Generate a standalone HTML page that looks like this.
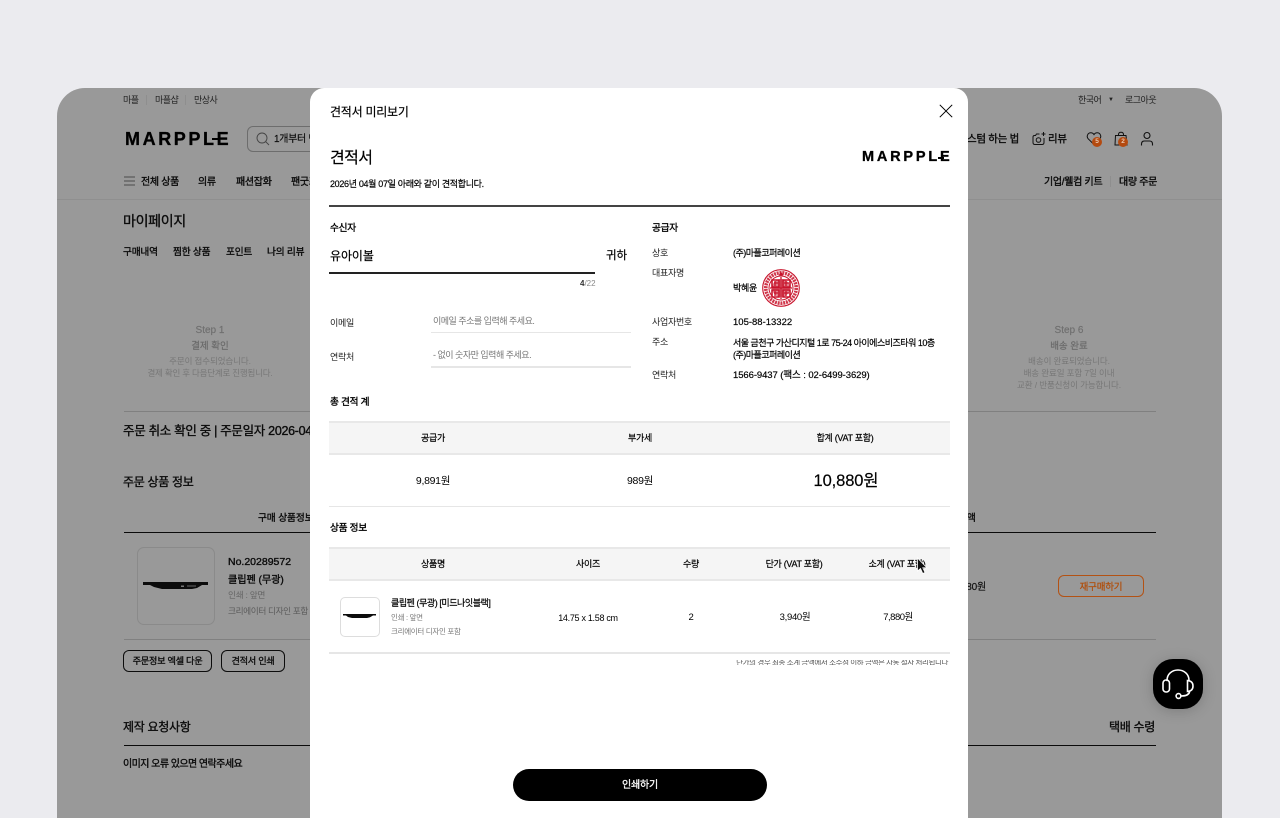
<!DOCTYPE html>
<html lang="ko"><head><meta charset="utf-8"><title>견적서 미리보기</title>
<style>
html,body{margin:0;padding:0;width:1280px;height:818px;overflow:hidden}
body{background:#ebebef;position:relative;font-family:"Liberation Sans","Noto Sans CJK KR",sans-serif;color:#000}
.t{position:absolute;line-height:16px;white-space:nowrap;font-size:10px;letter-spacing:-.3px}
.c{text-align:center}
.b{font-weight:400;-webkit-text-stroke:.35px currentColor}
.m{-webkit-text-stroke:.18px currentColor}
.n{letter-spacing:-.5px}
.r{position:absolute}
#win{position:absolute;left:57px;top:88px;width:1165px;height:730px;background:#999;border-radius:28px 28px 0 0;overflow:hidden}
#bg{position:absolute;left:-57px;top:-88px;width:1280px;height:818px}
#bg .t{color:#0b0b0b}
#modal{position:absolute;left:310px;top:88px;width:658px;height:730px;background:#fff;border-radius:14px 14px 0 0;overflow:hidden}
#m{position:absolute;left:-310px;top:-88px;width:1280px;height:818px}
.logo{position:absolute;font-weight:700;font-family:"Liberation Sans",sans-serif;white-space:nowrap;color:#000;-webkit-text-stroke:.3px #000}
.hd{position:absolute;left:329px;width:621px;background:#f5f5f5;border-top:2px solid #e8e8e8;border-bottom:2px solid #e8e8e8;box-sizing:border-box}
.ln{position:absolute;background:#e6e6e6}
.gbtn{position:absolute;box-sizing:border-box;border:1.5px solid #0c0c0c;border-radius:6px;text-align:center;font-size:9.2px;letter-spacing:-.3px;-webkit-text-stroke:.3px #0b0b0b;height:22px;line-height:21px;color:#0b0b0b;white-space:nowrap}
</style></head><body>

<div id="win"><div id="bg">
 <span class="t n" style="left:123px;top:92px;font-size:9px;color:#222">마플</span>
 <div class="r" style="left:146px;top:95px;width:1px;height:10px;background:#8e8e8e"></div>
 <span class="t n" style="left:155px;top:92px;font-size:9px;color:#222">마플샵</span>
 <div class="r" style="left:185px;top:95px;width:1px;height:10px;background:#8e8e8e"></div>
 <span class="t n" style="left:194px;top:92px;font-size:9px;color:#222">만상사</span>
 <span class="t n" style="left:1078px;top:92px;font-size:9px;color:#222">한국어</span>
 <span class="t" style="left:1108px;top:92px;font-size:6px;color:#222">▼</span>
 <span class="t n" style="left:1125px;top:92px;font-size:9px;color:#222">로그아웃</span>

 <div class="logo" style="left:125px;top:129px;font-size:18px;line-height:20px;letter-spacing:2.600px">MARPPLE</div>
 <div class="r" style="left:212px;top:138px;width:7px;height:2px;background:#000"></div>

 <div class="r" style="left:247px;top:126px;width:80px;height:26px;box-sizing:border-box;border:1px solid #6d6d6d;border-radius:6px"></div>
 <svg class="r" style="left:255px;top:131px" width="16" height="16" viewBox="0 0 16 16" fill="none" stroke="#444" stroke-width=".9"><circle cx="7" cy="7" r="5"/><path d="M10.600 10.600L14 14"/></svg>
 <span class="t m" style="left:274px;top:132px;font-size:10px">1개부터 만</span>

 <span class="t b" style="right:261px;top:131px;font-size:10.500px">커스텀 하는 법</span>
 <svg class="r" style="left:1031px;top:131px" width="16" height="15" viewBox="0 0 16 15" fill="none" stroke="#111" stroke-width="1"><path d="M8.500 3H5.500L4.500 4.500H3.500Q2 4.500 2 6V11.500Q2 13.500 4 13.500H11Q13 13.500 13 11.500V7"/><circle cx="7.500" cy="9" r="2.300"/><path d="M12.500 1v4M10.500 3h4"/></svg>
 <span class="t b" style="left:1048px;top:131px;font-size:10.500px">리뷰</span>
 <svg class="r" style="left:1086px;top:131px" width="17" height="16" viewBox="0 0 17 16" fill="none" stroke="#111" stroke-width="1"><path d="M8 13.500L2.200 7.800C0 5.200 2 1.800 4.800 1.800 6.200 1.800 7.300 2.500 8 3.600 8.700 2.500 9.800 1.800 11.200 1.800 14 1.800 16 5.200 13.800 7.800Z"/></svg>
 <div class="r c" style="left:1092px;top:137px;width:10px;height:10px;border-radius:50%;background:#b44a10;color:#e8c8b0;font-size:6.500px;line-height:10px;font-weight:700">5</div>
 <svg class="r" style="left:1113px;top:131px" width="16" height="16" viewBox="0 0 16 16" fill="none" stroke="#111" stroke-width="1"><path d="M2.500 4.500H13L14 14H2Z"/><path d="M5.500 4.500V3.500Q5.500 1.200 8 1.200T10.500 3.500V4.500"/></svg>
 <div class="r c" style="left:1118px;top:137px;width:10px;height:10px;border-radius:50%;background:#b44a10;color:#e8c8b0;font-size:6.500px;line-height:10px;font-weight:700">2</div>
 <svg class="r" style="left:1139px;top:131px" width="16" height="16" viewBox="0 0 16 16" fill="none" stroke="#111" stroke-width="1.100"><circle cx="8" cy="4.500" r="3"/><path d="M2.500 14.500V13Q2.500 10 5.500 10H10.500Q13.500 10 13.500 13V14.500"/></svg>

 <svg class="r" style="left:124px;top:176px" width="11" height="10" viewBox="0 0 11 10" stroke="#333" stroke-width=".8"><path d="M0 1h11M0 5h11M0 9h11"/></svg>
 <span class="t b" style="left:141px;top:175px">전체 상품</span>
 <span class="t b" style="left:198px;top:175px">의류</span>
 <span class="t b" style="left:236px;top:175px">패션잡화</span>
 <span class="t b" style="left:291px;top:175px">팬굿즈</span>
 <span class="t b" style="left:1044px;top:175px">기업/웰컴 키트</span>
 <div class="r" style="left:1110px;top:176px;width:1px;height:11px;background:#8e8e8e"></div>
 <span class="t b" style="left:1119px;top:175px">대량 주문</span>
 <div class="r" style="left:57px;top:199px;width:1165px;height:1px;background:#8f8f8f"></div>

 <span class="t b" style="left:123px;top:213px;font-size:14px">마이페이지</span>
 <span class="t b" style="left:123px;top:245px;font-size:9.700px;letter-spacing:-.2px">구매내역</span>
 <span class="t b" style="left:173px;top:245px;font-size:9.700px;letter-spacing:-.2px">찜한 상품</span>
 <span class="t b" style="left:226px;top:245px;font-size:9.700px;letter-spacing:-.2px">포인트</span>
 <span class="t b" style="left:267px;top:245px;font-size:9.700px;letter-spacing:-.2px">나의 리뷰</span>

 <span class="t c m" style="left:150px;width:120px;top:323px;font-size:10px;color:#6f6f6f;letter-spacing:0">Step 1</span>
 <span class="t c m" style="left:150px;width:120px;top:339px;font-size:9.500px;color:#6a6a6a;letter-spacing:0">결제 확인</span>
 <span class="t c" style="left:130px;width:160px;top:353px;font-size:8.500px;color:#777;letter-spacing:-.1px">주문이 접수되었습니다.</span>
 <span class="t c" style="left:130px;width:160px;top:365px;font-size:8.500px;color:#777;letter-spacing:-.2px">결제 확인 후 다음단계로 진행됩니다.</span>
 <span class="t c m" style="left:1009px;width:120px;top:323px;font-size:10px;color:#6f6f6f;letter-spacing:0">Step 6</span>
 <span class="t c m" style="left:1009px;width:120px;top:339px;font-size:9.500px;color:#6a6a6a;letter-spacing:0">배송 완료</span>
 <span class="t c" style="left:989px;width:160px;top:353px;font-size:8.500px;color:#777;letter-spacing:-.1px">배송이 완료되었습니다.</span>
 <span class="t c" style="left:989px;width:160px;top:365px;font-size:8.500px;color:#777;letter-spacing:-.1px">배송 완료일 포함 7일 이내</span>
 <span class="t c" style="left:989px;width:160px;top:377px;font-size:8.500px;color:#777;letter-spacing:-.1px">교환 / 반품신청이 가능합니다.</span>
 <div class="r" style="left:124px;top:411px;width:1032px;height:1px;background:#808080"></div>

 <span class="t b" style="left:123px;top:423px;font-size:12.500px">주문 취소 확인 중 | 주문일자 2026-04</span>
 <span class="t b" style="left:123px;top:474px;font-size:12px">주문 상품 정보</span>
 <span class="t b" style="left:258px;top:511px;font-size:9.700px;letter-spacing:-.1px">구매 상품정보</span>
 <span class="t b" style="left:958px;top:511px;font-size:9.700px;letter-spacing:0">금액</span>
 <div class="r" style="left:124px;top:532px;width:1032px;height:1px;background:#0a0a0a"></div>

 <div class="r" style="left:137px;top:547px;width:78px;height:78px;box-sizing:border-box;border:1px solid #8a8a8a;border-radius:7px"></div>
 <svg class="r" style="left:142px;top:580px" width="68" height="14" viewBox="0 0 68 14"><path d="M1 2H66V5H60L55 8 50 9H20L12 7 8 5H1Z" fill="#0c0c0c"/><rect x="39" y="5.500" width="3" height="1.500" fill="#777"/><rect x="45" y="5.500" width="9" height="1" fill="#666"/></svg>
 <span class="t b" style="left:228px;top:554px;font-size:10.500px;letter-spacing:0">No.20289572</span>
 <span class="t b" style="left:228px;top:573px;font-size:10.200px;letter-spacing:-.1px">클립펜 (무광)</span>
 <span class="t" style="left:228px;top:587px;font-size:8.700px;color:#666">인쇄 : 앞면</span>
 <span class="t" style="left:228px;top:603px;font-size:8.700px;color:#5c5c5c;letter-spacing:-.4px">크리에이터 디자인 포함</span>
 <span class="t m" style="right:294px;top:580px;font-size:10px;color:#111;letter-spacing:-.2px">7,880원</span>
 <div class="r" style="left:1058px;top:575px;width:86px;height:22px;box-sizing:border-box;border:1.200px solid #b35214;border-radius:6px;text-align:center;color:#b0500f;font-size:9.500px;-webkit-text-stroke:.3px #b0500f;line-height:23px;letter-spacing:-.2px">재구매하기</div>
 <div class="r" style="left:124px;top:639px;width:1032px;height:1px;background:#808080"></div>
 <div class="gbtn" style="left:123px;top:650px;width:89px">주문정보 엑셀 다운</div>
 <div class="gbtn" style="left:221px;top:650px;width:64px">견적서 인쇄</div>

 <span class="t b" style="left:123px;top:719px;font-size:12px">제작 요청사항</span>
 <span class="t b" style="left:1109px;top:719px;font-size:12px">택배 수령</span>
 <div class="r" style="left:124px;top:745px;width:1032px;height:1px;background:#0a0a0a"></div>
 <span class="t b" style="left:123px;top:757px;font-size:10px;letter-spacing:-.55px">이미지 오류 있으면 연락주세요</span>
</div></div>

<div class="r" style="left:1153px;top:659px;width:50px;height:50px;border-radius:20px;background:#000;box-shadow:0 2px 14px rgba(0,0,0,.18)"></div>
<svg class="r" style="left:1161px;top:667px" width="34" height="34" viewBox="0 0 34 34" fill="none" stroke="#fff" stroke-width="1.600" stroke-linecap="round"><path d="M6 13.500C6 7 11 3 17 3S28 7 28 13.500"/><rect x="2" y="13" width="6.500" height="12" rx="3"/><path d="M26.500 13.500Q32 14 32 19T26.500 24.500Z"/><path d="M28.500 25Q27.500 29 20 29"/><circle cx="17.500" cy="29" r="2.400"/></svg>

<div id="modal"><div id="m">
 <span class="t m" style="left:330px;top:104px;font-size:12px;letter-spacing:-.25px">견적서 미리보기</span>
 <svg class="r" style="left:938px;top:103px" width="16" height="16" viewBox="0 0 16 16" stroke="#000" stroke-width="1" fill="none"><path d="M1.800 1.800L14.200 14.200M14.200 1.800L1.800 14.200"/></svg>
 <span class="t m" style="left:330px;top:151px;font-size:16px;letter-spacing:-.6px">견적서</span>
 <div class="logo" style="left:862px;top:150px;font-size:14.500px;line-height:15px;letter-spacing:2.800px">MARPPLE</div>
 <div class="r" style="left:938px;top:157px;width:6px;height:1.500px;background:#000"></div>
 <span class="t m" style="left:330px;top:176px;font-size:9px;letter-spacing:-.33px">2026년 04월 07일 아래와 같이 견적합니다.</span>
 <div class="r" style="left:329px;top:205px;width:621px;height:2px;background:#444"></div>

 <span class="t b" style="left:330px;top:221px;font-size:9.700px">수신자</span>
 <span class="t m" style="left:330px;top:248px;font-size:12px;letter-spacing:-.1px">유아이볼</span>
 <span class="t m" style="left:606px;top:248px;font-size:11.500px;letter-spacing:-.1px">귀하</span>
 <div class="r" style="left:329px;top:272px;width:266px;height:2px;background:#222"></div>
 <span class="t" style="left:580px;top:276px;font-size:8px;color:#888;letter-spacing:0"><b style="color:#333">4</b>/22</span>

 <span class="t" style="left:330px;top:315px;font-size:9px;color:#222">이메일</span>
 <span class="t n" style="left:433px;top:313px;font-size:9px;color:#777">이메일 주소를 입력해 주세요.</span>
 <div class="ln" style="left:431px;top:332px;width:200px;height:1px"></div>
 <span class="t" style="left:330px;top:349px;font-size:9px;color:#222">연락처</span>
 <span class="t n" style="left:433px;top:347px;font-size:9px;color:#777">- 없이 숫자만 입력해 주세요.</span>
 <div class="ln" style="left:431px;top:366px;width:200px;height:2px"></div>

 <span class="t b" style="left:652px;top:221px;font-size:9.700px">공급자</span>
 <span class="t" style="left:652px;top:245px;font-size:9px;color:#222">상호</span>
 <span class="t m n" style="left:733px;top:245px;font-size:9px">(주)마플코퍼레이션</span>
 <span class="t" style="left:652px;top:265px;font-size:9px;color:#222">대표자명</span>
 <span class="t m" style="left:733px;top:280px;font-size:9px">박혜윤</span>
 <svg class="r" style="left:762px;top:269px" width="38" height="38" viewBox="0 0 38 38" fill="none" stroke="#c8142c">
  <circle cx="19" cy="19" r="18.300" stroke-width="1.100"/>
  <circle cx="19" cy="19" r="15.200" stroke-width="3.600" stroke-dasharray="2 .8" opacity=".85"/>
  <circle cx="19" cy="19" r="12" stroke-width="1"/>
  <circle cx="19" cy="19" r="9" fill="#c8142c" fill-opacity=".55" stroke="none"/>
  <path d="M10 11h7v7h-7zM21 11h7v7h-7zM10 21h7v7h-7zM21 21h7v7h-7z" stroke-width="1.600"/>
  <path d="M12 14h4M13 12v5M24 12v5M22 14h5M12 24h4M13 22v5M22 24h5M24 22v5M19 8v22M8 19h22" stroke-width="1.300"/>
  <path d="M19 2.500l2.500 4h-5z" fill="#c8142c" stroke="none"/>
 </svg>
 <span class="t" style="left:652px;top:314px;font-size:9px;color:#222">사업자번호</span>
 <span class="t m" style="left:733px;top:315px;font-size:9.500px;letter-spacing:0">105-88-13322</span>
 <span class="t" style="left:652px;top:334px;font-size:9px;color:#222">주소</span>
 <span class="t m n" style="left:733px;top:335px;font-size:9px">서울 금천구 가산디지털 1로 75-24 아이에스비즈타워 10층</span>
 <span class="t m n" style="left:733px;top:347px;font-size:9px">(주)마플코퍼레이션</span>
 <span class="t" style="left:652px;top:367px;font-size:9px;color:#222">연락처</span>
 <span class="t m" style="left:733px;top:368px;font-size:9.500px;letter-spacing:-.08px">1566-9437 (팩스 : 02-6499-3629)</span>

 <span class="t b" style="left:330px;top:395px;font-size:9.700px">총 견적 계</span>
 <div class="hd" style="top:421px;height:34px"></div>
 <span class="t c m" style="left:373px;width:120px;top:430px;font-size:9px">공급가</span>
 <span class="t c m" style="left:580px;width:120px;top:430px;font-size:9px">부가세</span>
 <span class="t c m" style="left:785px;width:120px;top:430px;font-size:9px">합계 (VAT 포함)</span>
 <span class="t c" style="left:373px;width:120px;top:473px;font-size:10.500px">9,891원</span>
 <span class="t c" style="left:580px;width:120px;top:473px;font-size:10.500px">989원</span>
 <span class="t c m" style="left:786px;width:120px;top:473px;font-size:16.500px;letter-spacing:-.1px">10,880원</span>
 <div class="ln" style="left:329px;top:506px;width:621px;height:1px"></div>

 <span class="t b" style="left:330px;top:521px;font-size:9.700px">상품 정보</span>
 <div class="hd" style="top:547px;height:34px"></div>
 <span class="t c m" style="left:373px;width:120px;top:556px;font-size:9px">상품명</span>
 <span class="t c m" style="left:528px;width:120px;top:556px;font-size:9px">사이즈</span>
 <span class="t c m" style="left:631px;width:120px;top:556px;font-size:9px">수량</span>
 <span class="t c m" style="left:734px;width:120px;top:556px;font-size:9px">단가 (VAT 포함)</span>
 <span class="t c m" style="left:837px;width:120px;top:556px;font-size:9px">소계 (VAT 포함)</span>
 <svg class="r" style="left:916px;top:557px" width="12" height="18" viewBox="0 0 12 18"><path d="M1.500 1V14L4.500 11.500 6.800 16.500 9 15.500 6.800 10.800H11Z" fill="#111" stroke="#fff" stroke-width=".8"/></svg>

 <div class="r" style="left:340px;top:597px;width:40px;height:40px;box-sizing:border-box;border:1px solid #ddd;border-radius:5px"></div>
 <svg class="r" style="left:342px;top:613px" width="35" height="8" viewBox="0 0 35 8"><path d="M1 1H34V2.500H31L28 4.300 25 5H10L6 4 4 2.500H1Z" fill="#0c0c0c"/></svg>
 <span class="t m" style="left:391px;top:595px;font-size:9px;letter-spacing:-.45px">클립펜 (무광) [미드나잇블랙]</span>
 <span class="t" style="left:391px;top:610px;font-size:7.500px;color:#777">인쇄 : 앞면</span>
 <span class="t" style="left:391px;top:624px;font-size:7.500px;color:#777;letter-spacing:-.3px">크리에이터 디자인 포함</span>
 <span class="t c" style="left:528px;width:120px;top:610px;font-size:9px;letter-spacing:-.3px">14.75 x 1.58 cm</span>
 <span class="t c" style="left:631px;width:120px;top:610px;font-size:9.500px">2</span>
 <span class="t c" style="left:735px;width:120px;top:610px;font-size:9.500px">3,940원</span>
 <span class="t c" style="left:838px;width:120px;top:610px;font-size:9.500px;letter-spacing:-.5px">7,880원</span>
 <div class="ln" style="left:329px;top:652px;width:621px;height:2px"></div>

 <div class="r" style="left:640px;top:660px;width:310px;height:5px;overflow:hidden">
  <span class="t" style="right:2px;top:-2px;font-size:7.500px;line-height:10px;color:#555;letter-spacing:-.4px">단가의 경우 최종 소계 금액에서 소수점 이하 금액은 자동 절사 처리됩니다</span>
 </div>

 <div class="r c m" style="left:513px;top:769px;width:254px;height:32px;border-radius:16px;background:#000;color:#fff;font-size:10px;line-height:34px;letter-spacing:-.2px;-webkit-text-stroke:.3px #fff">인쇄하기</div>
</div></div>
</body></html>
